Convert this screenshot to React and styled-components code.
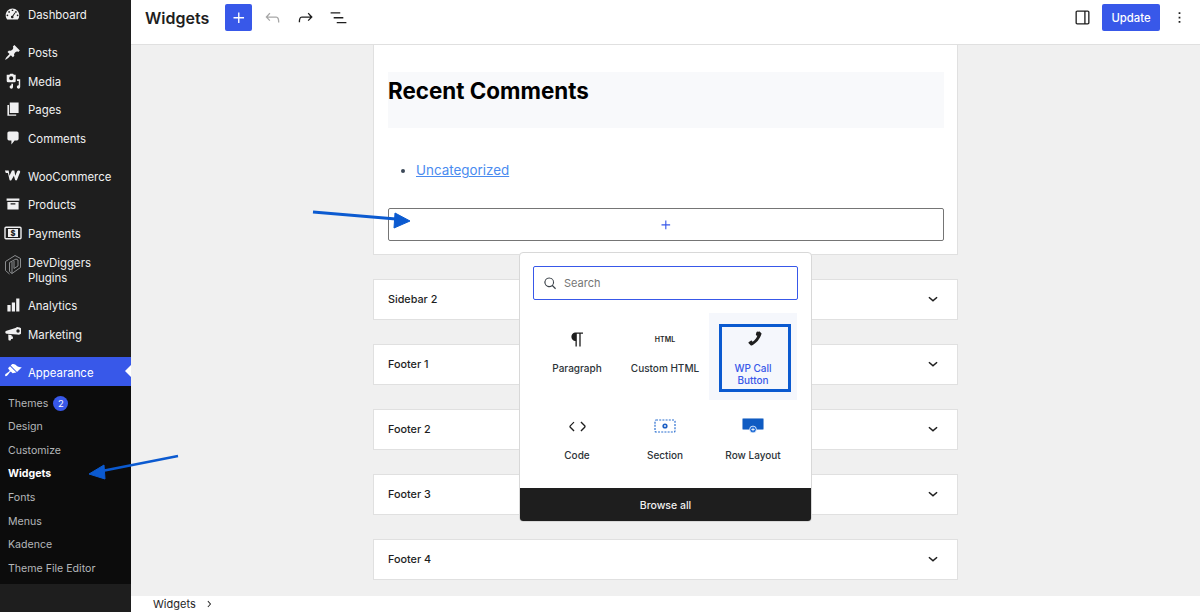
import React from 'react'
import styled, { createGlobalStyle } from 'styled-components'

const GlobalStyle = createGlobalStyle`
  * { box-sizing: border-box; }
  html, body { margin: 0; padding: 0; height: 100%; overflow: hidden; }
  body { font-family: Inter, "Liberation Sans", sans-serif; color: #1e1e1e; }
`

const Icon = ({ d, size = 24, box = 24, color = 'currentColor' }) => (
  <svg width={size} height={size} viewBox={`0 0 ${box} ${box}`} fill={color}>
    <path d={d} />
  </svg>
)

const HtmlMark = styled.span`
  font-size: 7px;
  font-weight: 600;
  letter-spacing: 0;
`

const paths = {
  dashboard: 'M3.76 16h12.48A7.97 7.97 0 0 0 18 11c0-4.42-3.58-8-8-8s-8 3.58-8 8c0 1.9.66 3.63 1.76 5zM10 4a1 1 0 1 1 0 2 1 1 0 0 1 0-2zM6 6a1 1 0 1 1 0 2 1 1 0 0 1 0-2zm8 0a1 1 0 1 1 0 2 1 1 0 0 1 0-2zm-1.5 1.6l.9.5-2.5 3.9a1.5 1.5 0 1 1-1-.6l2.6-3.8zM4 10a1 1 0 1 1 0 2 1 1 0 0 1 0-2zm12 0a1 1 0 1 1 0 2 1 1 0 0 1 0-2z',
  post: 'M10.44 3.02l1.82-1.82 6.36 6.35-1.83 1.82c-1.05-.68-2.48-.57-3.41.36l-.75.75c-.92.93-1.04 2.35-.35 3.41l-1.83 1.82-2.41-2.41-2.8 2.79c-.42.42-3.38 2.71-3.8 2.29s1.86-3.39 2.28-3.81l2.79-2.79L4.1 9.36l1.83-1.82c1.05.69 2.48.57 3.4-.36l.75-.75c.93-.92 1.05-2.35.36-3.41z',
  media: 'M3 3h3l1-1h3l1 1h2v7a1.5 1.5 0 0 1-1.5 1.5h-7A1.5 1.5 0 0 1 3 10V3zm5 1.6a2.3 2.3 0 1 0 0 4.6 2.3 2.3 0 0 0 0-4.6zM14.5 8H18v8.6a1.9 1.9 0 1 1-1.6-1.9V10h-1.9V8zM8 13h2v3.6a1.9 1.9 0 1 1-1.6-1.9l-.4-1.7z',
  pages: 'M6 2h11v13H6V2zM3 5h2v12h9v1.5H3V5z',
  comment: 'M5 2h10c1.1 0 2 .9 2 2v7c0 1.1-.9 2-2 2h-3l-4 5v-5H5c-1.1 0-2-.9-2-2V4c0-1.1.9-2 2-2z',
  woo: 'M1 4h4.2l.9 5.6L8.9 4h2.6l1 5.6L14.6 4.6c.8-1.3 3.8-.9 3.4 1l-3.5 8.7c-.4 1-1.8 1-2.2 0L11 9.6l-2.7 4.8c-.5 1-1.9.8-2.2-.3L4.4 6.6H2z',
  products: 'M2 3h16v3H2V3zm1 4.5h14V17H3V7.5zM7 9v1.5h6V9H7z',
  analytics: 'M3 10h4v8H3v-8zm5.5-3h4v11h-4V7zM14 2h4v16h-4V2z',
  marketing: 'M16.5 2.5a4.5 4.5 0 0 1 0 9c-.4 0-.8-.1-1.2-.2L3 10.2a1.6 1.6 0 0 1-1.5-1.6v-.3c0-.8.6-1.5 1.5-1.6l10.5-3.2a4.5 4.5 0 0 1 3-1zm0 2.5a2 2 0 1 0 0 4 2 2 0 0 0 0-4zM5 11.3l4 .5-.2 1.5h.7c.6 0 1 .4 1 1v1.2c0 .5-.4 1-1 1H8.3l-.2 1c-.1.5-.5.7-1 .7H6.2c-.6 0-1-.5-1-1.1L5 11.3z',
  brush: 'M14.48 11.06L7.41 3.99l1.5-1.5c.5-.56 2.3-.47 3.51.32 1.21.8 1.43 1.28 2.91 2.1 1.18.64 2.45 1.26 4.45.85zm-.71.71L6.7 4.7 4.93 6.47c-.39.39-.39 1.02 0 1.41l1.06 1.06c.39.39.39 1.03 0 1.42-.6.6-1.43 1.11-2.21 1.69-.35.26-.7.53-1.01.84C1.43 13.23 1 14.5 1.3 15.3c.3.8 1.53.38 2.88-.97.31-.31.58-.66.84-1.01.58-.78 1.09-1.61 1.69-2.21.39-.39 1.03-.39 1.42 0l1.06 1.06c.39.39 1.02.39 1.41 0z',
  plus: 'M11 12.5V17.5H12.5V12.5H17.5V11H12.5V6H11V11H6V12.5H11Z',
  undo: 'M18.3 11.7c-.6-.6-1.4-.9-2.3-.9H6.7l2.9-3.3-1.1-1-4.5 5L8.5 16l1-1-2.7-2.7H16c.5 0 .9.2 1.3.5 1 1 1 3.4 1 4.5v.3h1.5v-.2c0-1.5 0-4.3-1.5-5.7z',
  redo: 'M15.6 6.5l-1.1 1 2.9 3.3H8c-.9 0-1.7.3-2.3.9-1.4 1.5-1.4 4.2-1.4 5.6v.2h1.5v-.3c0-1.1 0-3.5 1-4.5.3-.3.7-.5 1.3-.5h9.2L14.5 15l1.1 1.1 4.6-4.6-4.6-5z',
  list: 'M3 6h11v1.5H3V6zm3.5 5.5h11V13h-11v-1.5zM21 17H10v1.5h11V17z',
  sidebar: 'M18 4H6c-1.1 0-2 .9-2 2v12c0 1.1.9 2 2 2h12c1.1 0 2-.9 2-2V6c0-1.1-.9-2-2-2zM5.5 18V6c0-.3.2-.5.5-.5h8v13H6c-.3 0-.5-.2-.5-.5zm13 0c0 .3-.2.5-.5.5h-2.5v-13H18c.3 0 .5.2.5.5v12z',
  dots: 'M11 6h2v2h-2V6zm0 5h2v2h-2v-2zm0 5h2v2h-2v-2z',
  search: 'M11 4.5a6.5 6.5 0 1 0 3.9 11.7l4 4 1.1-1.1-4-4A6.5 6.5 0 0 0 11 4.5zm0 1.5a5 5 0 1 1 0 10 5 5 0 0 1 0-10z',
  chevronDown: 'M17.5 10.6L12 15.4l-5.5-4.8 1.2-1.3L12 13l4.3-3.7 1.2 1.3z',
  chevronRight: 'M10.6 6.5l5 5.5-5 5.5-1.1-1 4.1-4.5-4.1-4.5 1.1-1z',
  paragraph: 'M18.3 4H9.9v-.1l-.9.2c-2.3.4-4 2.4-4 4.8s1.7 4.4 4 4.8l.7.1V20h1.5V5.5h2.9V20h1.5V5.5h2.7V4z',
  code: 'M20.8 10.7l-4.3-4.3-1.1 1.1 4.3 4.3c.1.1.1.3 0 .4l-4.3 4.3 1.1 1.1 4.3-4.3c.7-.8.7-1.9 0-2.6zM4.2 11.8l4.3-4.3-1-1-4.3 4.3c-.7.7-.7 1.8 0 2.5l4.3 4.3 1.1-1.1-4.3-4.3c-.2-.1-.2-.3-.1-.4z',
  phone: 'M17.6 3.2l2.4 1.9c.4.3.5.8.3 1.2-1.6 4.9-5 9.6-10 11.9-.5.2-1 .1-1.3-.3L7 16c-.4-.5-.3-1.1.2-1.4l2-1.3c.4-.2.9-.2 1.2.2l.7.8c2.3-1.2 4.1-3.7 4.9-6.1l-1-.5c-.4-.2-.6-.7-.5-1.2l.7-2.3c.2-.6 1.9-.9 2.4 0z'
}

const PaymentsIcon = () => (
  <svg width='18' height='18' viewBox='0 0 18 18' fill='none'>
    <rect x='1' y='3.2' width='16' height='11.6' rx='1' stroke='#f0f0f1' strokeWidth='1.4' />
    <rect x='4' y='5' width='10' height='8' fill='#f0f0f1' />
    <text x='9' y='12' fontSize='7.5' fontWeight='800' textAnchor='middle' fill='#1e1e1e' fontFamily='Inter'>$</text>
  </svg>
)

const DevDiggersIcon = () => (
  <svg width='18' height='24' viewBox='0 0 18 22' fill='none' stroke='#8a8c8e' strokeWidth='1'>
    <path d='M1.5 7.5L11 1.5l5.5 3v9L8 19.5l-2.5-2V8.5L12 5l2 1v6l-4 2.5' />
    <path d='M1.5 7.5v9l4 3.5M8 8v11.5M10 7v7.5' />
  </svg>
)

const SectionIcon = () => (
  <svg width='22' height='14' viewBox='0 0 22 14' fill='none'>
    <rect x='1' y='1' width='20' height='12' rx='1' stroke='#2a6fd0' strokeWidth='1.2' strokeDasharray='2 1.2' />
    <circle cx='11' cy='7' r='2.6' fill='#1c5fc4' />
    <circle cx='11' cy='7' r='.9' fill='#fff' />
  </svg>
)

const RowLayoutIcon = () => (
  <svg width='22' height='16' viewBox='0 0 22 16' fill='none'>
    <rect x='.5' y='.5' width='21' height='11' rx='1' fill='#0f5bc2' stroke='#7ea6dc' />
    <circle cx='11' cy='11.5' r='3.4' fill='#1c6ad6' stroke='#fff' strokeWidth='.8' />
    <path d='M11 9.8v3.4M9.3 11.5h3.4' stroke='#fff' strokeWidth='.8' />
  </svg>
)

const menuGroups = [
  [{ label: 'Dashboard', icon: <Icon d={paths.dashboard} box={20} size={17} /> }],
  [
    { label: 'Posts', icon: <Icon d={paths.post} box={20} size={17} /> },
    { label: 'Media', icon: <Icon d={paths.media} box={20} size={18} /> },
    { label: 'Pages', icon: <Icon d={paths.pages} box={20} size={16} /> },
    { label: 'Comments', icon: <Icon d={paths.comment} box={20} size={16} /> }
  ],
  [
    { label: 'WooCommerce', icon: <Icon d={paths.woo} box={20} size={18} /> },
    { label: 'Products', icon: <Icon d={paths.products} box={20} size={16} /> },
    { label: 'Payments', icon: <PaymentsIcon /> },
    { label: 'DevDiggers Plugins', icon: <DevDiggersIcon />, tall: true },
    { label: 'Analytics', icon: <Icon d={paths.analytics} box={20} size={16} /> },
    { label: 'Marketing', icon: <Icon d={paths.marketing} box={20} size={17} /> }
  ]
]

const subItems = [
  { label: 'Themes', badge: 2 },
  { label: 'Design' },
  { label: 'Customize' },
  { label: 'Widgets', current: true },
  { label: 'Fonts' },
  { label: 'Menus' },
  { label: 'Kadence' },
  { label: 'Theme File Editor' }
]

const blocks = [
  { label: 'Paragraph', icon: <Icon d={paths.paragraph} size={21} /> },
  { label: 'Custom HTML', icon: <HtmlMark>HTML</HtmlMark> },
  { label: 'WP Call Button', icon: <Icon d={paths.phone} size={23} />, selected: true },
  { label: 'Code', icon: <Icon d={paths.code} size={21} /> },
  { label: 'Section', icon: <SectionIcon /> },
  { label: 'Row Layout', icon: <RowLayoutIcon /> }
]

const areas = ['Sidebar 2', 'Footer 1', 'Footer 2', 'Footer 3', 'Footer 4']

export default function App () {
  return (
    <>
      <GlobalStyle />
      <Page>
        <Sidebar>
          {menuGroups.map((group, i) => (
            <MenuGroup key={i}>
              {group.map(item => (
                <MenuItem key={item.label} $tall={item.tall}>
                  <MenuIcon>{item.icon}</MenuIcon>
                  <MenuLabel>{item.label}</MenuLabel>
                </MenuItem>
              ))}
            </MenuGroup>
          ))}
          <ActiveItem>
            <MenuIcon><Icon d={paths.brush} box={20} size={18} /></MenuIcon>
            <MenuLabel>Appearance</MenuLabel>
          </ActiveItem>
          <SubMenu>
            {subItems.map(item => (
              <SubItem key={item.label} $current={item.current}>
                {item.label}
                {item.badge && <Badge>{item.badge}</Badge>}
              </SubItem>
            ))}
          </SubMenu>
        </Sidebar>

        <Main>
          <Header>
            <Title>Widgets</Title>
            <AddButton><Icon d={paths.plus} size={22} /></AddButton>
            <ToolButton $muted><Icon d={paths.undo} size={21} /></ToolButton>
            <ToolButton><Icon d={paths.redo} size={21} /></ToolButton>
            <ToolButton><Icon d={paths.list} size={21} /></ToolButton>
            <HeaderRight>
              <ToolButton><Icon d={paths.sidebar} size={21} /></ToolButton>
              <UpdateButton>Update</UpdateButton>
              <ToolButton><Icon d={paths.dots} size={21} /></ToolButton>
            </HeaderRight>
          </Header>

          <Canvas>
            <Column>
              <OpenArea>
                <HeadingBlock>Recent Comments</HeadingBlock>
                <CategoryList>
                  <li><a href='#uncategorized'>Uncategorized</a></li>
                </CategoryList>
                <Appender><Icon d={paths.plus} size={18} color='#3858e9' /></Appender>
              </OpenArea>
              {areas.map(name => (
                <AreaRow key={name}>
                  {name}
                  <Icon d={paths.chevronDown} size={20} />
                </AreaRow>
              ))}
            </Column>
          </Canvas>

          <Breadcrumb>
            Widgets
            <Icon d={paths.chevronRight} size={14} />
          </Breadcrumb>
        </Main>

        <Inserter>
          <SearchBox>
            <Icon d={paths.search} size={18} color='#3c434a' />
            <span>Search</span>
          </SearchBox>
          <BlockGrid>
            {blocks.map(block => (
              <BlockTile key={block.label} $selected={block.selected}>
                <BlockInner $selected={block.selected}>
                  <BlockIcon>{block.icon}</BlockIcon>
                  <BlockName>{block.label}</BlockName>
                </BlockInner>
              </BlockTile>
            ))}
          </BlockGrid>
          <BrowseAll>Browse all</BrowseAll>
        </Inserter>

        <Annotations width='1200' height='612' viewBox='0 0 1200 612'>
          <path d='M313 212L396 219' stroke='#0b5ad0' strokeWidth='3' />
          <path d='M410 221L395 213L394 228Z' fill='#0b5ad0' stroke='#0b5ad0' />
          <path d='M178 456L102 471' stroke='#0b5ad0' strokeWidth='2.5' />
          <path d='M89 474L104 465L105 479Z' fill='#0b5ad0' stroke='#0b5ad0' />
        </Annotations>
      </Page>
    </>
  )
}

// Style

const Page = styled.div`
  position: relative;
  display: grid;
  grid-template-columns: 131px 1fr;
  width: 1200px;
  height: 612px;
  overflow: hidden;
  background: #f0f0f0;
`
const Sidebar = styled.nav`
  display: flex;
  flex-direction: column;
  background: #1e1e1e;
  color: #f0f0f1;
`
const MenuGroup = styled.div`
  margin-bottom: 9px;
`
const MenuItem = styled.div`
  display: flex;
  align-items: ${p => (p.$tall ? 'flex-start' : 'center')};
  height: ${p => (p.$tall ? '43px' : '28.7px')};
  padding-top: ${p => (p.$tall ? '5px' : '0')};
  font-size: 11.4px;
  line-height: 15px;
`
const MenuIcon = styled.span`
  display: flex;
  flex: 0 0 28px;
  justify-content: center;
  padding-right: 3px;
`
const MenuLabel = styled.span`
  width: 80px;
  padding-top: 3px;
`
const ActiveItem = styled.div`
  position: relative;
  display: flex;
  align-items: center;
  height: 29px;
  background: #3858e9;
  color: #fff;
  font-size: 11.4px;
  &::after {
    content: '';
    position: absolute;
    right: 0;
    top: 8px;
    border: 6px solid transparent;
    border-right-color: #fff;
  }
`
const SubMenu = styled.div`
  padding: 4px 0 5px;
  background: #0c0c0c;
`
const SubItem = styled.div`
  display: flex;
  align-items: center;
  height: 23.6px;
  padding: 3px 0 0 8px;
  font-size: 10.6px;
  font-weight: ${p => (p.$current ? 700 : 400)};
  color: ${p => (p.$current ? '#fff' : '#b4b7ba')};
`
const Badge = styled.span`
  display: flex;
  align-items: center;
  justify-content: center;
  width: 15px;
  height: 15px;
  margin-left: 5px;
  border-radius: 50%;
  background: #3858e9;
  color: #fff;
  font-size: 9.5px;
`
const Main = styled.div`
  display: flex;
  flex-direction: column;
  min-width: 0;
  height: 612px;
`
const Header = styled.header`
  display: flex;
  flex: 0 0 45px;
  align-items: flex-start;
  padding: 4px 4px 0 14px;
  background: #fff;
  border-bottom: 1px solid #e0e0e0;
`
const Title = styled.h1`
  margin: 1px 21px 0 0;
  width: 59px;
  font-size: 16px;
  line-height: 27px;
  font-weight: 600;
`
const AddButton = styled.div`
  display: flex;
  align-items: center;
  justify-content: center;
  width: 27px;
  height: 27px;
  margin-right: 4px;
  border-radius: 2px;
  background: #3858e9;
  color: #fff;
`
const ToolButton = styled.div`
  display: flex;
  align-items: center;
  justify-content: center;
  width: 33px;
  height: 27px;
  color: ${p => (p.$muted ? '#a7a7a7' : '#1e1e1e')};
`
const HeaderRight = styled.div`
  display: flex;
  align-items: flex-start;
  margin-left: auto;
`
const UpdateButton = styled.div`
  display: flex;
  align-items: center;
  justify-content: center;
  width: 58px;
  height: 27px;
  margin: 0 3px 0 3px;
  padding-top: 1px;
  border-radius: 2px;
  background: #3858e9;
  color: #fff;
  font-size: 11.3px;
  font-weight: 500;
`
const Canvas = styled.div`
  flex: 1;
  min-height: 0;
  overflow: hidden;
  background: #f0f0f0;
`
const Column = styled.div`
  display: flex;
  flex-direction: column;
  gap: 24px;
  width: 585px;
  margin-left: 242px;
`
const OpenArea = styled.section`
  height: 210px;
  padding: 27px 13px 0 14px;
  background: #fff;
  border: 1px solid #e0e0e0;
  border-top: 0;
`
const HeadingBlock = styled.div`
  height: 56px;
  padding-top: 4px;
  background: #f8f9fb;
  color: #000;
  font-size: 22.4px;
  line-height: 30px;
  font-weight: 700;
`
const CategoryList = styled.ul`
  margin: 32px 0 0;
  padding-left: 28px;
  font-size: 13.4px;
  line-height: 20px;
  color: #3c4858;
  a {
    color: #4a8bef;
  }
`
const Appender = styled.div`
  display: flex;
  align-items: center;
  justify-content: center;
  height: 33px;
  margin-top: 28px;
  border: 1.5px solid #757575;
  border-radius: 2px;
`
const AreaRow = styled.div`
  display: flex;
  align-items: center;
  justify-content: space-between;
  height: 41px;
  padding: 0 14px 1px;
  background: #fff;
  border: 1px solid #e0e0e0;
  font-size: 10.8px;
  font-weight: 500;
`
const Breadcrumb = styled.footer`
  display: flex;
  flex: 0 0 16px;
  align-items: center;
  gap: 6px;
  padding-left: 22px;
  background: #fff;
  font-size: 11px;
`
const Inserter = styled.div`
  position: absolute;
  left: 519px;
  top: 252px;
  display: flex;
  flex-direction: column;
  width: 293px;
  height: 270px;
  padding-top: 13px;
  background: #fff;
  border: 1px solid #d8d8d8;
  border-radius: 4px;
  overflow: hidden;
`
const SearchBox = styled.div`
  display: flex;
  align-items: center;
  gap: 5px;
  height: 34px;
  margin: 0 13px;
  padding-left: 7px;
  border: 1px solid #3858e9;
  border-radius: 2px;
  color: #757575;
  font-size: 11px;
`
const BlockGrid = styled.div`
  display: grid;
  grid-template-columns: repeat(3, 88px);
  grid-auto-rows: 87px;
  margin: 13px 13px 0;
  flex: 1;
`
const BlockTile = styled.div`
  display: flex;
  justify-content: center;
  padding-top: 11px;
  background: ${p => (p.$selected ? '#f5f7fc' : 'transparent')};
`
const BlockInner = styled.div`
  display: flex;
  flex-direction: column;
  align-items: center;
  width: ${p => (p.$selected ? '72px' : '100%')};
  height: 68px;
  margin-left: ${p => (p.$selected ? '3px' : '0')};
  padding-right: ${p => (p.$selected ? '3px' : '0')};
  border: 3px solid ${p => (p.$selected ? '#0b5ad0' : 'transparent')};
  color: ${p => (p.$selected ? '#3858e9' : '#2c3338')};
`
const BlockIcon = styled.div`
  display: flex;
  align-items: center;
  justify-content: center;
  height: 24px;
  margin-bottom: 11px;
  color: #1e1e1e;
`
const BlockName = styled.div`
  font-size: 10px;
  line-height: 12px;
  font-weight: 500;
  text-align: center;
`
const BrowseAll = styled.div`
  display: flex;
  flex: 0 0 33px;
  align-items: center;
  justify-content: center;
  padding-top: 1px;
  background: #1e1e1e;
  color: #f0f0f0;
  font-size: 10.5px;
  font-weight: 500;
`
const Annotations = styled.svg`
  position: absolute;
  left: 0;
  top: 0;
  pointer-events: none;
`
